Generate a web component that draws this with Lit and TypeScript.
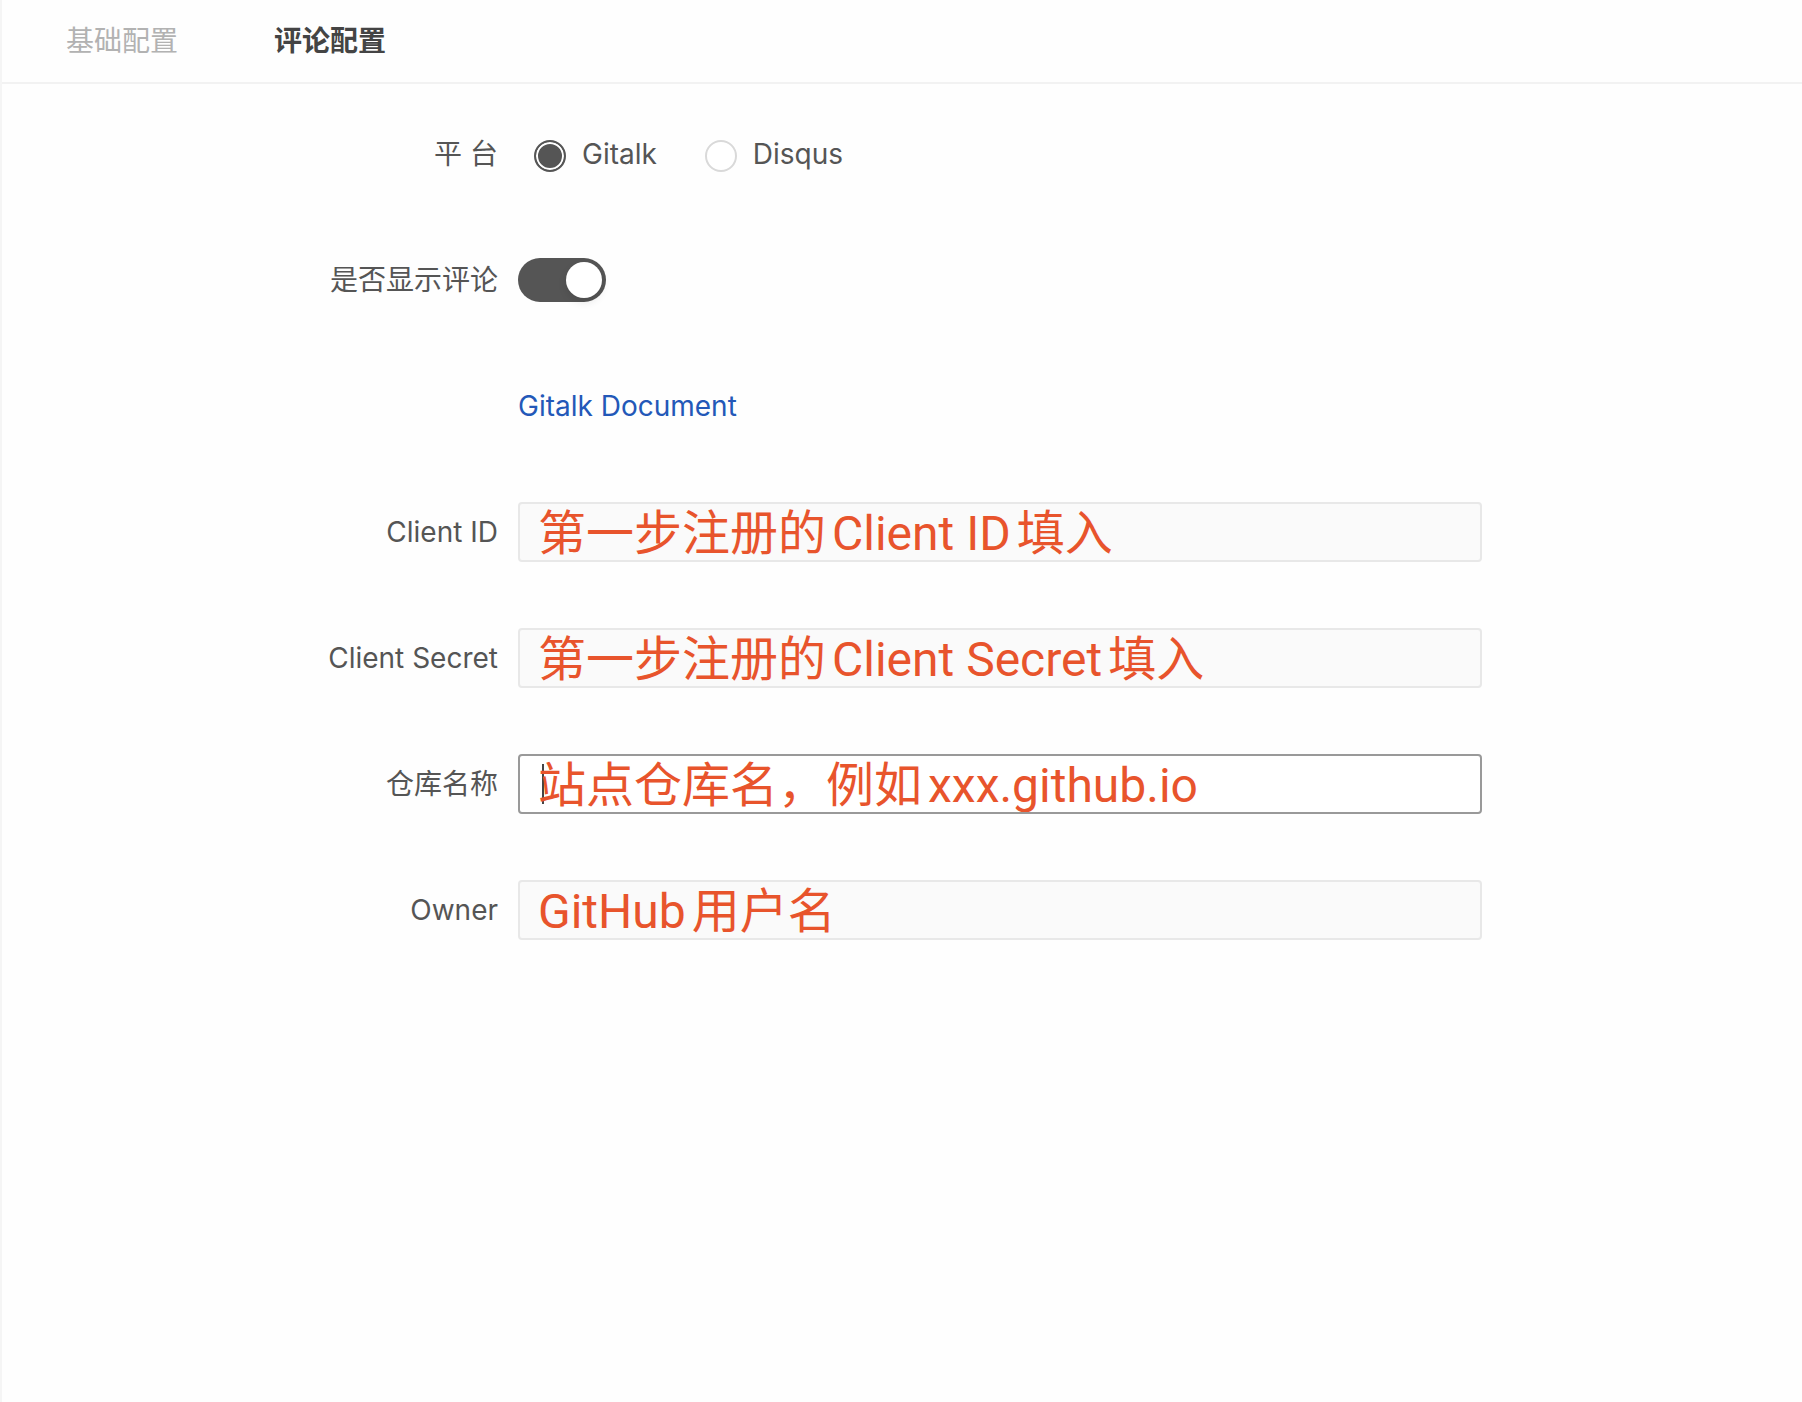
import { LitElement, html, css } from "lit";
import { customElement, property, state } from "lit/decorators.js";
import { classMap } from "lit/directives/class-map.js";

interface Field {
  id: string;
  label: string;
  value: string;
}

const TABS = ["基础配置", "评论配置"];
const PLATFORMS = ["Gitalk", "Disqus"];
const FIELDS: Field[] = [
  { id: "client-id", label: "Client ID", value: "第一步注册的Client ID填入" },
  { id: "client-secret", label: "Client Secret", value: "第一步注册的Client Secret填入" },
  { id: "repository", label: "仓库名称", value: "站点仓库名，例如xxx.github.io" },
  { id: "owner", label: "Owner", value: "GitHub用户名" },
];

@customElement("toggle-switch")
export class ToggleSwitch extends LitElement {
  @property({ type: Boolean }) checked = false;
  @property() label = "";

  static styles = css`
    :host {
      display: block;
      height: 44px;
    }
    .track {
      display: flex;
      align-items: center;
      width: 88px;
      height: 44px;
      padding: 4px;
      border: 0;
      border-radius: 22px;
      background: #bfbfbf;
      cursor: pointer;
    }
    .track.on {
      justify-content: flex-end;
      background: #555;
    }
    .knob {
      width: 36px;
      height: 36px;
      border-radius: 50%;
      background: #fff;
      box-shadow: 0 4px 8px rgba(0, 0, 0, 0.1);
    }
  `;

  render() {
    return html`<button
      class=${classMap({ track: true, on: this.checked })}
      type="button"
      role="switch"
      aria-checked=${this.checked ? "true" : "false"}
      aria-label=${this.label}
      @click=${() => (this.checked = !this.checked)}
    ><span class="knob"></span></button>`;
  }
}

@customElement("app-root")
export class AppRoot extends LitElement {
  @state() private tab = 1;
  @state() private platform = "Gitalk";
  @state() private active = "repository";

  static styles = css`
    * {
      box-sizing: border-box;
    }
    :host {
      display: block;
      box-sizing: border-box;
      min-height: 100vh;
      border-left: 2px solid #f5f5f5;
      background: #fefefe;
      color: #555;
      font-family: Inter, "Noto Sans CJK SC", sans-serif;
      font-size: 28px;
      line-height: 40px;
    }
    .tabs {
      display: flex;
      gap: 32px;
      padding: 21px 32px;
      border-bottom: 2px solid #f2f2f2;
    }
    .tab {
      padding: 0 32px;
      border: 0;
      background: none;
      color: #b2b2b2;
      font: inherit;
      cursor: pointer;
    }
    .tab.selected {
      color: #444;
      font-weight: 700;
    }
    .form {
      display: grid;
      gap: 66px;
      padding: 40px 0;
    }
    .row {
      display: grid;
      grid-template-columns: 516fr 964fr 320fr;
      align-items: center;
      min-height: 60px;
    }
    .label {
      padding-right: 20px;
      text-align: right;
    }
    .control {
      grid-column: 2;
    }
    .radios {
      display: flex;
      gap: 48px;
      padding-left: 16px;
    }
    .option {
      display: flex;
      align-items: center;
      gap: 16px;
      cursor: pointer;
    }
    .radio {
      appearance: none;
      width: 32px;
      height: 32px;
      margin: 4px 0 0;
      border: 2px solid #d9d9d9;
      border-radius: 50%;
      background: #fff;
    }
    .radio:checked {
      border-color: #555;
      background: #555;
      box-shadow: inset 0 0 0 2px #fff;
    }
    .link {
      color: #2358b8;
      text-decoration: none;
    }
    .input {
      display: block;
      width: 100%;
      height: 60px;
      padding: 4px 18px 0;
      border: 2px solid #e8e8e8;
      border-radius: 4px;
      outline: 0;
      background: #fafafa;
      color: #e8542c;
      font-family: Roboto, "Noto Sans CJK SC", sans-serif;
      font-size: 48px;
      line-height: 60px;
      text-autospace: normal;
    }
    .input.active {
      border-color: #999;
      background: linear-gradient(#444, #444) 22px center / 2px 40px no-repeat #fff;
    }
  `;

  render() {
    return html`
      <nav class="tabs">
        ${TABS.map(
          (name, i) => html`<button
            type="button"
            class=${classMap({ tab: true, selected: i === this.tab })}
            @click=${() => (this.tab = i)}
          >${name}</button>`
        )}
      </nav>
      <form class="form">
        <div class="row" role="radiogroup" aria-labelledby="platform">
          <span class="label" id="platform">平 台</span>
          <div class="control radios">
            ${PLATFORMS.map(
              (name) => html`<label class="option">
                <input
                  class="radio"
                  type="radio"
                  name="platform"
                  .checked=${name === this.platform}
                  @change=${() => (this.platform = name)}
                />${name}</label>`
            )}
          </div>
        </div>
        <div class="row">
          <span class="label">是否显示评论</span>
          <toggle-switch class="control" label="是否显示评论" checked></toggle-switch>
        </div>
        <div class="row">
          <div class="control"><a class="link" href="https://github.com/gitalk/gitalk">Gitalk Document</a></div>
        </div>
        ${FIELDS.map(
          (f) => html`<div class="row">
            <label class="label" for=${f.id}>${f.label}</label>
            <input
              class=${classMap({ input: true, control: true, active: f.id === this.active })}
              id=${f.id}
              type="text"
              .value=${f.value}
              @focus=${() => (this.active = f.id)}
            />
          </div>`
        )}
      </form>
    `;
  }
}
